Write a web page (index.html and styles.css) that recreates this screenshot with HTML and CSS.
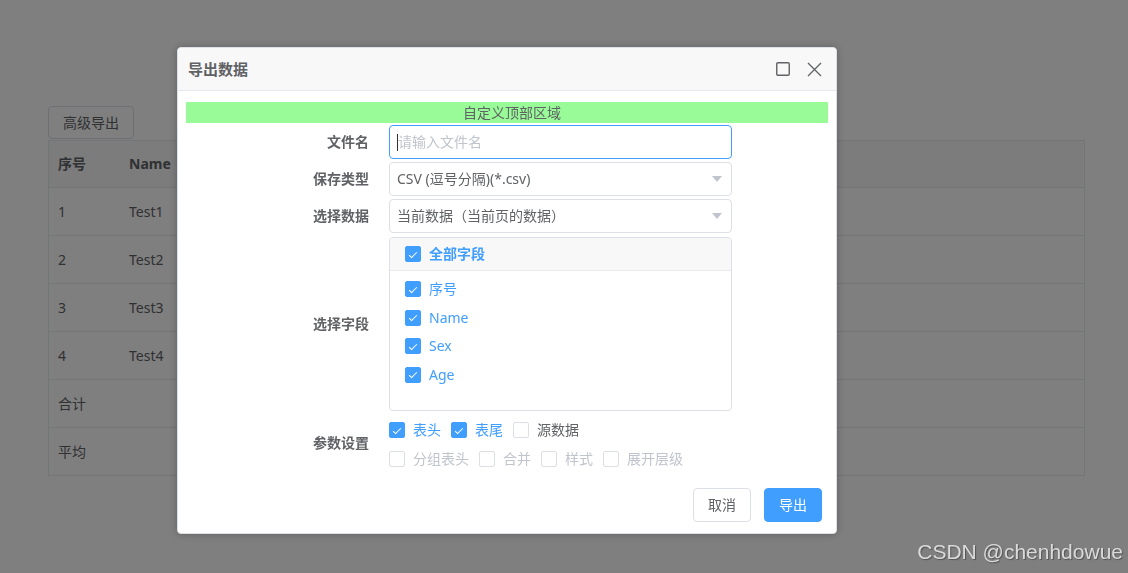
FILE: index.html
```html
<!DOCTYPE html>
<html lang="zh-CN">
<head>
<meta charset="utf-8">
<title>导出数据</title>
<link rel="stylesheet" href="styles.css">
</head>
<body>
<div class="page">
  <button class="adv-btn">高级导出</button>
  <div class="grid-table">
    <div class="tr head"><div class="td1">序号</div><div class="td2">Name</div></div>
    <div class="tr"><div class="td1">1</div><div class="td2">Test1</div></div>
    <div class="tr"><div class="td1">2</div><div class="td2">Test2</div></div>
    <div class="tr"><div class="td1">3</div><div class="td2">Test3</div></div>
    <div class="tr"><div class="td1">4</div><div class="td2">Test4</div></div>
    <div class="tr"><div class="td1">合计</div><div class="td2"></div></div>
    <div class="tr"><div class="td1">平均</div><div class="td2"></div></div>
  </div>
</div>

<div class="mask"></div>

<div class="modal">
  <div class="modal-header">
    <div class="modal-title">导出数据</div>
    <div class="modal-icons">
      <svg width="14" height="14" viewBox="0 0 14 14"><rect x="0.75" y="0.75" width="12.5" height="12.5" rx="1.2" fill="none" stroke="#606266" stroke-width="1.4"/></svg>
      <svg width="15" height="15" viewBox="0 0 15 15"><path d="M1 1 L14 14 M14 1 L1 14" fill="none" stroke="#606266" stroke-width="1.3"/></svg>
    </div>
  </div>
  <div class="modal-body">
    <div class="custom-top">自定义顶部区域</div>
    <div class="form-row r1">
      <div class="label">文件名</div>
      <div class="ctrl"><div class="input focus"><span class="caret"></span><span class="placeholder">请输入文件名</span></div></div>
    </div>
    <div class="form-row r2">
      <div class="label">保存类型</div>
      <div class="ctrl"><div class="input"><span>CSV (逗号分隔)(*.csv)</span><span class="arrow"></span></div></div>
    </div>
    <div class="form-row r3">
      <div class="label">选择数据</div>
      <div class="ctrl"><div class="input"><span>当前数据（当前页的数据）</span><span class="arrow"></span></div></div>
    </div>
    <div class="form-row r4">
      <div class="label">选择字段</div>
      <div class="ctrl">
        <div class="fields">
          <div class="fields-head"><span class="cb on"></span><span>全部字段</span></div>
          <div class="fields-list">
            <div class="fitem"><span class="cb on"></span><span>序号</span></div>
            <div class="fitem"><span class="cb on"></span><span>Name</span></div>
            <div class="fitem"><span class="cb on"></span><span>Sex</span></div>
            <div class="fitem"><span class="cb on"></span><span>Age</span></div>
          </div>
        </div>
      </div>
    </div>
    <div class="form-row r5">
      <div class="label">参数设置</div>
      <div class="ctrl params">
        <div class="prow">
          <div class="opt checked"><span class="cb on"></span><span>表头</span></div>
          <div class="opt checked"><span class="cb on"></span><span>表尾</span></div>
          <div class="opt"><span class="cb"></span><span>源数据</span></div>
        </div>
        <div class="prow">
          <div class="opt disabled"><span class="cb"></span><span>分组表头</span></div>
          <div class="opt disabled"><span class="cb"></span><span>合并</span></div>
          <div class="opt disabled"><span class="cb"></span><span>样式</span></div>
          <div class="opt disabled"><span class="cb"></span><span>展开层级</span></div>
        </div>
      </div>
    </div>
  </div>
  <div class="modal-footer">
    <button class="btn">取消</button>
    <button class="btn primary">导出</button>
  </div>
</div>

<div class="wm">CSDN @chenhdowue</div>
</body>
</html>
```

FILE: styles.css
```css
* { box-sizing: border-box; }

body {
  margin: 0;
  width: 1128px;
  height: 573px;
  overflow: hidden;
  background: #fff;
  font-family: "Noto Sans", "Noto Sans CJK SC", sans-serif;
  font-size: 14px;
  line-height: 20px;
  color: #606266;
}

.page { padding: 106px 0 0 48px; }

.adv-btn {
  display: block;
  height: 33px;
  margin-bottom: 1px;
  padding: 0 14px;
  border: 1px solid #dcdfe6;
  border-radius: 4px;
  background: #fff;
  color: #606266;
  font: inherit;
}

.grid-table {
  width: 1037px;
  border: 1px solid #e8eaec;
}
.tr {
  display: flex;
  align-items: center;
  height: 48px;
  border-bottom: 1px solid #e8eaec;
}
.tr.head {
  height: 47px;
  background: #f8f8f9;
  font-weight: bold;
}
.tr:last-child { border-bottom: none; height: 47px; }
.td1 { width: 70px; padding-left: 9px; }
.td2 { padding-left: 10px; }

.mask {
  position: fixed;
  inset: 0;
  background: rgba(0, 0, 0, 0.5);
}

.modal {
  position: fixed;
  left: 177px;
  top: 47px;
  width: 660px;
  background: #fff;
  border: 1px solid #dcdfe6;
  border-radius: 4px;
  box-shadow: 0 0 8px rgba(0, 0, 0, 0.25);
}

.modal-header {
  display: flex;
  align-items: center;
  height: 43px;
  padding: 0 14px 0 10px;
  background: #f8f8f8;
  border-bottom: 1px solid #e4e7ed;
  border-radius: 4px 4px 0 0;
}
.modal-title {
  flex: 1;
  font-size: 15px;
  font-weight: bold;
  color: #606266;
}
.modal-icons {
  display: flex;
  align-items: center;
  gap: 17px;
}
.modal-icons svg { display: block; }

.modal-body { padding: 11px 8px 0; }

.custom-top {
  height: 21px;
  line-height: 21px;
  background: #98fb98;
  text-align: center;
  color: #606266;
  padding-left: 10px;
}

.form-row { display: flex; align-items: center; }
.form-row .label {
  width: 203px;
  padding-right: 20px;
  text-align: right;
  font-weight: bold;
  color: #606266;
}
.ctrl { width: 343px; }
.r1 { margin-top: 2px; }
.r2, .r3 { margin-top: 3px; }
.r4 { margin-top: 4px; }
.r5 { margin-top: 5px; }
.r5 .label { padding-bottom: 3px; }

.input {
  display: flex;
  align-items: center;
  justify-content: space-between;
  height: 34px;
  padding: 0 9px 0 7px;
  border: 1px solid #dcdfe6;
  border-radius: 4px;
  color: #606266;
}
.input.focus { border-color: #409eff; justify-content: flex-start; }
.caret { width: 1px; height: 17px; background: #303133; }
.placeholder { color: #c0c4cc; }
.arrow {
  width: 0;
  height: 0;
  border-left: 5.5px solid transparent;
  border-right: 5.5px solid transparent;
  border-top: 6px solid #c0c4cc;
}

.fields {
  height: 174px;
  border: 1px solid #dcdfe6;
  border-radius: 4px;
}
.fields-head {
  display: flex;
  align-items: center;
  height: 33px;
  padding-left: 15px;
  background: #f8f8f9;
  border-bottom: 1px solid #e8eaec;
  border-radius: 4px 4px 0 0;
  font-weight: bold;
  color: #409eff;
}
.fields-list { padding-top: 4px; }
.fitem {
  display: flex;
  align-items: center;
  height: 28.5px;
  padding-left: 15px;
  color: #409eff;
}

.cb {
  position: relative;
  flex-shrink: 0;
  width: 16px;
  height: 16px;
  margin-right: 8px;
  border: 1px solid #dcdfe6;
  border-radius: 2px;
  background: #fff;
}
.cb.on { background: #409eff; border-color: #409eff; }
.cb.on::after {
  content: "";
  position: absolute;
  left: 5px;
  top: 2.5px;
  width: 3px;
  height: 7px;
  border: solid #fff;
  border-width: 0 1.3px 1.3px 0;
  transform: rotate(45deg);
}

.params { display: flex; flex-direction: column; gap: 1px; }
.prow { display: flex; align-items: center; height: 28px; }
.opt { display: flex; align-items: center; margin-right: 10px; color: #606266; }
.opt.checked { color: #409eff; }
.opt.disabled { color: #c0c4cc; }
.opt.disabled .cb { border-color: #dcdfe6; }

.modal-footer {
  display: flex;
  justify-content: flex-end;
  gap: 13px;
  padding: 15px 14px 11px;
}
.btn {
  height: 34px;
  padding: 0 14px;
  border: 1px solid #dcdfe6;
  border-radius: 4px;
  background: #fff;
  color: #606266;
  font: inherit;
}
.btn.primary {
  background: #409eff;
  border-color: #409eff;
  color: #fff;
}

.wm {
  position: fixed;
  right: 5px;
  bottom: 9px;
  font-family: "Liberation Sans", Arial, sans-serif;
  font-size: 21px;
  line-height: 24px;
  color: #dadada;
  text-shadow: 1px 1px 1px rgba(0, 0, 0, 0.35);
}
```
